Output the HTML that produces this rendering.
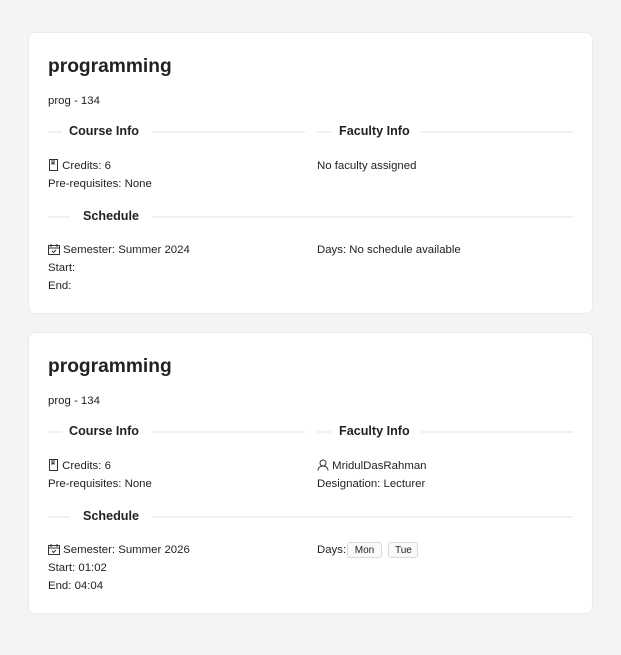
<!DOCTYPE html>
<html><head><style>
body{margin:0;background:#f4f4f4;font-family:"Segoe UI","Liberation Sans",sans-serif;color:#222;width:621px;height:655px;position:relative;overflow:hidden}
.card{position:absolute;left:28px;width:565px;height:282px;background:#fff;border:1px solid #ebebeb;border-radius:7px;box-sizing:border-box}
.a{position:absolute;white-space:nowrap;font-size:11.4px;line-height:16px}
.t{font-size:19.2px;font-weight:bold;line-height:26px}
.h{font-size:12.6px;font-weight:bold;line-height:18px}
.l{position:absolute;height:2px;background:#f0f0f0}
.tag{position:absolute;top:0;height:16px;box-sizing:border-box;border:1px solid #d9d9d9;border-radius:3px;background:#fafafa;font-size:10px;padding:0 6px;line-height:15px;text-align:center}
svg{vertical-align:-2px}
</style></head><body>
<div class="card" style="top:32px">
<div class="a t" style="left:19px;top:21px">programming</div>
<div class="a" style="left:19px;top:60px">prog - 134</div>
<div class="l" style="left:19px;width:14px;top:98px"></div>
<div class="a h" style="left:40px;top:89px">Course Info</div>
<div class="l" style="left:123px;width:153px;top:98px"></div>
<div class="l" style="left:288px;width:14px;top:98px"></div>
<div class="a h" style="left:310px;top:89px">Faculty Info</div>
<div class="l" style="left:392px;width:152px;top:98px"></div>
<div class="a" style="left:19px;top:125px"><svg width="11" height="12"><path d="M1.5 .5h8v11h-8z M6 .5v4.5l-1-1-1 1V.5" fill="none" stroke="#333"/></svg> Credits: 6</div>
<div class="a" style="left:19px;top:143px">Pre-requisites: None</div>
<div class="a" style="left:288px;top:125px">No faculty assigned</div>
<div class="l" style="left:19px;width:22px;top:183px"></div>
<div class="a h" style="left:54px;top:174px">Schedule</div>
<div class="l" style="left:123px;width:421px;top:183px"></div>
<div class="a" style="left:19px;top:209px"><svg width="12" height="12"><path d="M.5 2.5h11v9H.5z M.5 5h11 M3 1v3 M9 1v3 M4 8l1.5 1.5L8 7" fill="none" stroke="#333"/></svg> Semester: Summer 2024</div>
<div class="a" style="left:19px;top:227px">Start:</div>
<div class="a" style="left:19px;top:245px">End:</div>
<div class="a" style="left:288px;top:209px">Days: No schedule available</div>
</div>
<div class="card" style="top:332px">
<div class="a t" style="left:19px;top:21px">programming</div>
<div class="a" style="left:19px;top:60px">prog - 134</div>
<div class="l" style="left:19px;width:14px;top:98px"></div>
<div class="a h" style="left:40px;top:89px">Course Info</div>
<div class="l" style="left:123px;width:153px;top:98px"></div>
<div class="l" style="left:288px;width:14px;top:98px"></div>
<div class="a h" style="left:310px;top:89px">Faculty Info</div>
<div class="l" style="left:392px;width:152px;top:98px"></div>
<div class="a" style="left:19px;top:125px"><svg width="11" height="12"><path d="M1.5 .5h8v11h-8z M6 .5v4.5l-1-1-1 1V.5" fill="none" stroke="#333"/></svg> Credits: 6</div>
<div class="a" style="left:19px;top:143px">Pre-requisites: None</div>
<div class="a" style="left:288px;top:125px"><svg width="12" height="12"><circle cx="6" cy="4" r="3" fill="none" stroke="#333"/><path d="M1 11.5c0-3 2.5-4.5 5-4.5s5 1.5 5 4.5" fill="none" stroke="#333"/></svg> MridulDasRahman</div>
<div class="a" style="left:288px;top:143px">Designation: Lecturer</div>
<div class="l" style="left:19px;width:22px;top:183px"></div>
<div class="a h" style="left:54px;top:174px">Schedule</div>
<div class="l" style="left:123px;width:421px;top:183px"></div>
<div class="a" style="left:19px;top:209px"><svg width="12" height="12"><path d="M.5 2.5h11v9H.5z M.5 5h11 M3 1v3 M9 1v3 M4 8l1.5 1.5L8 7" fill="none" stroke="#333"/></svg> Semester: Summer 2026</div>
<div class="a" style="left:19px;top:227px">Start: 01:02</div>
<div class="a" style="left:19px;top:245px">End: 04:04</div>
<div class="a" style="left:288px;top:209px;width:130px">Days:<span class="tag" style="left:30px;width:35px">Mon</span><span class="tag" style="left:71px;width:30px">Tue</span></div>
</div>
</body></html>
